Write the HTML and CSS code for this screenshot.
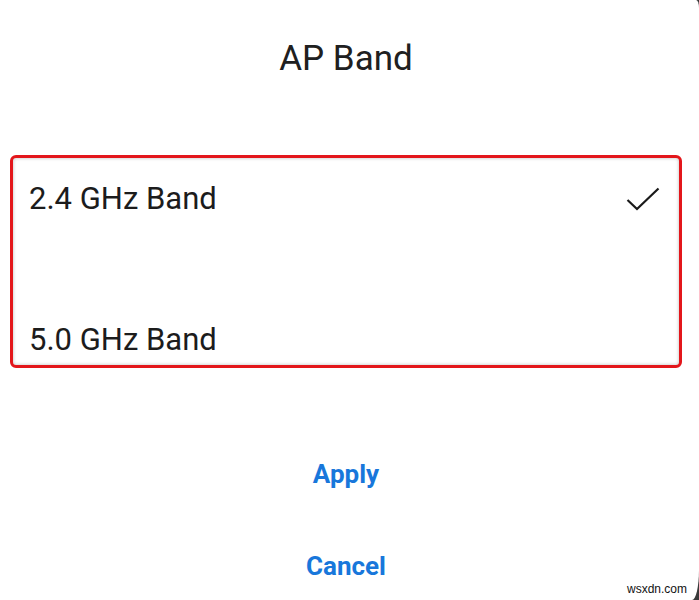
FILE: index.html
```html
<!DOCTYPE html>
<html lang="en">
<head>
    <meta charset="UTF-8">
    <meta name="viewport" content="width=device-width, initial-scale=1.0">
    <title>AP Band</title>
    <link rel="stylesheet" href="styles.css">
</head>
<body>
    <div class="dialog">
        <h1 class="dialog-title">AP Band</h1>
        <div class="options">
            <div class="option selected">
                <span class="option-label">2.4 GHz Band</span>
                <svg class="check" width="34" height="24" viewBox="0 0 34 24">
                    <path d="M1.5 13 L11 22 L32.5 1.5" fill="none" stroke="#1a1a1a" stroke-width="2.2"/>
                </svg>
            </div>
            <div class="option">
                <span class="option-label">5.0 GHz Band</span>
            </div>
            <div class="highlight"></div>
        </div>
        <div class="actions">
            <button class="action-button apply">Apply</button>
            <button class="action-button">Cancel</button>
        </div>
        <div class="watermark">wsxdn.com</div>
    </div>
</body>
</html>
```

FILE: styles.css
```css
html, body {
    margin: 0;
    height: 100%;
}
body {
    background-color: #3a3a3a;
    font-family: Roboto, "Noto Sans", sans-serif;
    overflow: hidden;
}
.dialog {
    position: relative;
    box-sizing: border-box;
    width: 699px;
    height: 600px;
    padding-right: 7px;
    background-color: #fff;
    border-top-right-radius: 3px 8px;
    border-bottom-right-radius: 7px 30px;
}
.dialog-title {
    margin: 0;
    height: 118px;
    line-height: 118px;
    font-size: 35px;
    font-weight: 400;
    color: #202020;
    text-align: center;
}
.options {
    position: relative;
    margin-top: 10px;
}
.option {
    display: flex;
    align-items: center;
    justify-content: space-between;
    height: 141px;
    padding: 0 32px 0 29px;
}
.option-label {
    font-size: 31px;
    color: #1c1c1c;
}
.highlight {
    position: absolute;
    top: 27px;
    left: 10px;
    width: 666px;
    height: 207px;
    border: 3px solid #e3161b;
    border-radius: 6px;
    box-shadow: inset 0 0 0 1px #e4e4e4, inset 0 0 3px 1px #d8d8d8;
}
.actions {
    display: flex;
    flex-direction: column;
    align-items: center;
    margin-top: 18px;
}
.action-button {
    height: 92px;
    padding: 0 20px;
    border: none;
    background: none;
    font-family: Roboto, "Noto Sans", sans-serif;
    font-size: 26px;
    font-weight: 700;
    color: #1877db;
    cursor: pointer;
}
.watermark {
    position: absolute;
    right: 12px;
    bottom: 5px;
    font-family: "Liberation Sans", Arial, sans-serif;
    font-size: 12px;
    line-height: 12px;
    color: #111;
}
```
